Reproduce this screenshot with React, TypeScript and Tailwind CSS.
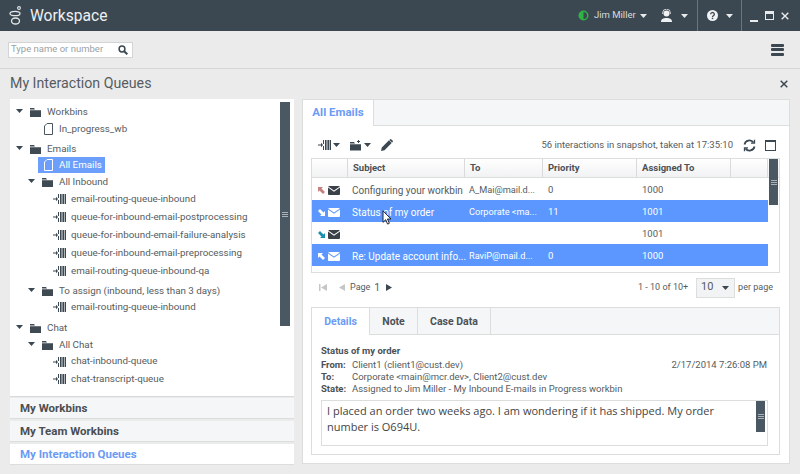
import type { ReactNode } from "react";

function Caret({ className = "text-[#3b4851]" }: { className?: string }) {
  return (
    <svg width="7" height="4" viewBox="0 0 7 4" className={`shrink-0 ${className}`}>
      <path d="M0 0h7L3.5 4z" fill="currentColor" />
    </svg>
  );
}

function FolderIcon() {
  return (
    <svg width="11" height="10" viewBox="0 0 11 10" className="shrink-0 text-[#3f4a52]">
      <path d="M0 2.500V1h4l1 1.500zM0 3.200h11V10H0z" fill="currentColor" />
    </svg>
  );
}

function DocIcon({ className = "text-[#4a555d]" }: { className?: string }) {
  return (
    <svg width="9" height="12" viewBox="0 0 9 12" className={`shrink-0 ${className}`}>
      <path d="M3 .5h5.500v11H.5V3z" fill="none" stroke="currentColor" />
    </svg>
  );
}

function QueueIcon({ className = "text-[#3b4851]" }: { className?: string }) {
  return (
    <svg width="13" height="10" viewBox="0 0 13 10" className={`shrink-0 ${className}`}>
      <path d="M0 4.500h3V2.800L5 5 3 7.200V5.500H0z" fill="currentColor" />
      <path d="M5 0h1v4H5zM5 6h1v4H5z" fill="currentColor" />
      <path d="M7 0h1.600v10H7zM9.400 0H11v10H9.400zM11.600 0H13v10h-1.400z" fill="currentColor" />
    </svg>
  );
}

function Envelope({ className }: { className: string }) {
  return (
    <svg width="12" height="9" viewBox="0 0 12 9" className={`shrink-0 ${className}`}>
      <path d="M1 0h10a1 1 0 0 1 .8.5L6 4.600.2.500A1 1 0 0 1 1 0zM0 1.600l6 4.200 6-4.200V8a1 1 0 0 1-1 1H1a1 1 0 0 1-1-1z" fill="currentColor" />
    </svg>
  );
}

function ArrowIn({ className, flip }: { className: string; flip?: boolean }) {
  return (
    <svg width="7" height="7" viewBox="0 0 7 7" className={`shrink-0 ${flip ? "rotate-180" : ""} ${className}`}>
      <path d="M0 0h5L3.500 1.500 7 5 5 7 1.500 3.500 0 5z" fill="currentColor" />
    </svg>
  );
}

function GripBar({ className }: { className: string }) {
  return (
    <div className={`flex shrink-0 flex-col items-center justify-center gap-[1px] bg-[#4a5863] ${className}`}>
      <div className="h-px w-[6px] bg-[#aab2b8]" />
      <div className="h-px w-[6px] bg-[#aab2b8]" />
      <div className="h-px w-[6px] bg-[#aab2b8]" />
    </div>
  );
}

function TreeRow({
  indent,
  className,
  children,
}: {
  indent: string;
  className: string;
  children: ReactNode;
}) {
  return <div className={`flex items-center whitespace-nowrap ${indent} ${className}`}>{children}</div>;
}

function Folder({ label, level, className }: { label: string; level: 0 | 1; className: string }) {
  return (
    <TreeRow indent={level === 0 ? "pl-[2px]" : "pl-[14px]"} className={className}>
      <Caret className="mb-[3px] mr-[7px] text-[#3b4851]" />
      <FolderIcon />
      <span className="ml-[6px]">{label}</span>
    </TreeRow>
  );
}

function Queue({ label, className }: { label: string; className: string }) {
  return (
    <TreeRow indent="pl-[39px]" className={className}>
      <QueueIcon />
      <span className="ml-[5px]">{label}</span>
    </TreeRow>
  );
}

function Accordion({ label, active }: { label: string; active?: boolean }) {
  return (
    <div
      className={`flex h-[21px] items-center border-b border-[#dcdddd] pl-[10px] pt-[1px] text-[11.5px] font-bold ${
        active ? "bg-white text-[#6b9bf5]" : "bg-[#f5f6f8] text-[#4a4f53]"
      }`}
    >
      {label}
    </div>
  );
}

const rows = [
  { dir: "red", subject: "Configuring your workbin", to: "A_Mai@mail.d...", priority: "0", assigned: "1000" },
  { dir: "in", subject: "Status of my order", to: "Corporate <ma...", priority: "11", assigned: "1001", selected: true },
  { dir: "teal", subject: "", to: "", priority: "", assigned: "1001" },
  { dir: "out", subject: "Re: Update account info...", to: "RaviP@mail.d...", priority: "0", assigned: "1000", selected: true },
];

function MailRow({ row }: { row: (typeof rows)[number] }) {
  const sel = row.selected;
  return (
    <div className={`flex h-[22px] items-center pt-[2px] ${sel ? "bg-[#5c97ff] text-white" : "text-[#555c61]"}`}>
      <div className="flex w-[36px] items-center pl-[6px]">
        {row.dir === "red" && <ArrowIn className="mr-[3px] text-[#c98080]" />}
        {row.dir === "in" && <ArrowIn flip className="mr-[3px] text-white" />}
        {row.dir === "teal" && <ArrowIn flip className="mr-[3px] text-[#1b8fb0]" />}
        {row.dir === "out" && <ArrowIn className="mr-[3px] text-white" />}
        <Envelope className={sel ? "text-white" : "text-[#3b4149]"} />
      </div>
      <div className="w-[117px] whitespace-nowrap pl-[4px] text-[10px]">{row.subject}</div>
      <div className="w-[78px] whitespace-nowrap pl-[4px] text-[9.2px]">{row.to}</div>
      <div className="w-[94px] pl-[5px]">{row.priority}</div>
      <div className="pl-[5px]">{row.assigned}</div>
    </div>
  );
}

function HeaderCell({ label, className }: { label?: string; className: string }) {
  return (
    <div className={`flex h-full items-center border-r border-[#d8dadb] pl-[5px] font-bold text-[#4c5156] ${className}`}>
      {label}
    </div>
  );
}

export default function App() {
  return (
    <div className="flex h-[474px] w-[800px] flex-col overflow-hidden bg-[#ebebeb] font-['Roboto',sans-serif] text-[9.5px] text-[#555c61]">
      <header className="flex h-[31px] shrink-0 items-center bg-[#3b4851] text-white">
        <svg width="14" height="20" viewBox="0 0 14 20" className="ml-[9px] mt-[1px] text-[#e4e7e8]">
          <circle cx="10" cy="2" r="1.400" fill="none" stroke="currentColor" strokeWidth="1.100" />
          <ellipse cx="6" cy="7.500" rx="5" ry="2.200" fill="none" stroke="currentColor" strokeWidth="1.300" />
          <ellipse cx="6.500" cy="15" rx="4" ry="3" fill="none" stroke="currentColor" strokeWidth="1.300" />
        </svg>
        <span className="ml-[7px] mt-[2px] text-[15.6px] text-[#eef0f1]">Workspace</span>
        <div className="ml-auto flex h-full items-center">
          <svg width="11" height="11" viewBox="0 0 11 11" className="mr-[5px]">
            <circle cx="5.500" cy="5.500" r="5" fill="#2fb344" />
            <path d="M5.500 2a3.500 3.500 0 0 1 0 7z" fill="#3b4851" />
          </svg>
          <span className="w-[42px] whitespace-nowrap text-[9.5px] text-[#d8dcde]">Jim Miller</span>
          <Caret className="ml-[4px] mr-[13px] text-[#e8eaeb]" />
          <svg width="13" height="13" viewBox="0 0 13 13" className="text-[#eef0f1]">
            <circle cx="6.500" cy="4.500" r="3" fill="currentColor" />
            <path d="M2.600 5V4a3.900 3.900 0 0 1 7.800 0v1" fill="none" stroke="currentColor" strokeWidth="0.800" />
            <path d="M1 13c0-3 2-4 5.500-4s5.500 1 5.500 4z" fill="currentColor" />
          </svg>
          <Caret className="ml-[8px] mr-[9px] text-[#e8eaeb]" />
          <div className="h-full w-px bg-[#6a757c]" />
          <svg width="11" height="11" viewBox="0 0 11 11" className="ml-[9px]">
            <circle cx="5.500" cy="5.500" r="5.500" fill="#f0f2f3" />
            <path d="M3.700 4.200a1.800 1.700 0 1 1 2.700 1.500c-.6.400-.9.600-.9 1.200" fill="none" stroke="#3b4851" strokeWidth="1.300" />
            <rect x="4.800" y="7.700" width="1.400" height="1.400" fill="#3b4851" />
          </svg>
          <Caret className="ml-[8px] mr-[8px] text-[#e8eaeb]" />
          <div className="h-full w-px bg-[#6a757c]" />
          <div className="ml-[8px] mt-[10px] h-[2px] w-[8px] self-center bg-[#e8eaeb]" />
          <div className="ml-[7px] h-[9px] w-[9px] border-[1.5px] border-t-[3px] border-[#e8eaeb]" />
          <svg width="8" height="8" viewBox="0 0 8 8" className="ml-[7px] mr-[11px] text-[#e8eaeb]">
            <path d="M.7.7l6.600 6.600M7.300.7L.7 7.300" stroke="currentColor" strokeWidth="1.400" />
          </svg>
        </div>
      </header>

      <div className="flex h-[38px] shrink-0 items-center justify-between border-b border-[#d5d6d7] pl-[8px] pr-[16px]">
        <div className="flex h-[16px] w-[125px] items-center justify-between border border-[#d3d4d5] bg-white pl-[2px] pr-[4px]">
          <span className="text-[9.5px] text-[#9a9fa3]">Type name or number</span>
          <svg width="10" height="10" viewBox="0 0 10 10" className="text-[#3b4851]">
            <circle cx="4" cy="4" r="2.900" fill="none" stroke="currentColor" strokeWidth="1.500" />
            <path d="M6.200 6.200L9.300 9.300" stroke="currentColor" strokeWidth="2" />
          </svg>
        </div>
        <div className="flex w-[13px] flex-col gap-[1.500px]">
          <div className="h-[3px] rounded-[1px] bg-[#3b4851]" />
          <div className="h-[3px] rounded-[1px] bg-[#3b4851]" />
          <div className="h-[3px] rounded-[1px] bg-[#3b4851]" />
        </div>
      </div>

      <div className="flex h-[30px] shrink-0 items-center justify-between pl-[10px] pr-[12px]">
        <span className="text-[14.2px] text-[#555c61]">My Interaction Queues</span>
        <svg width="8" height="8" viewBox="0 0 8 8" className="text-[#3b4851]">
          <path d="M.7.7l6.600 6.600M7.300.7L.7 7.300" stroke="currentColor" strokeWidth="1.500" />
        </svg>
      </div>

      <div className="flex items-start pl-[10px]">
        <aside className="flex w-[284px] shrink-0 flex-col gap-[2px]">
          <div className="flex h-[297px] bg-white pl-[4px] pr-[4px] pt-[3px] text-[9.8px] text-[#555c61] shadow-[0_1px_0_#d8d9da]">
            <div className="flex-1 pt-[2px]">
              <Folder label="Workbins" level={0} className="h-[16px]" />
              <TreeRow indent="pl-[30px]" className="h-[18px]">
                <DocIcon />
                <span className="ml-[6px]">In_progress_wb</span>
              </TreeRow>
              <Folder label="Emails" level={0} className="mt-[3px] h-[16px]" />
              <div className="ml-[24px] flex h-[16px] w-[67px] items-center whitespace-nowrap bg-[#6b9ffb] pl-[6px] text-white">
                <DocIcon className="text-white" />
                <span className="ml-[6px]">All Emails</span>
              </div>
              <Folder label="All Inbound" level={1} className="mt-[1px] h-[16px]" />
              <Queue label="email-routing-queue-inbound" className="h-[18px]" />
              <Queue label="queue-for-inbound-email-postprocessing" className="h-[18px]" />
              <Queue label="queue-for-inbound-email-failure-analysis" className="h-[18px]" />
              <Queue label="queue-for-inbound-email-preprocessing" className="h-[18px]" />
              <Queue label="email-routing-queue-inbound-qa" className="h-[18px]" />
              <Folder label="To assign (inbound, less than 3 days)" level={1} className="mt-[3px] h-[16px]" />
              <Queue label="email-routing-queue-inbound" className="h-[16px]" />
              <Folder label="Chat" level={0} className="mt-[5px] h-[16px]" />
              <Folder label="All Chat" level={1} className="mt-[1px] h-[16px]" />
              <Queue label="chat-inbound-queue" className="h-[17px]" />
              <Queue label="chat-transcript-queue" className="h-[18px]" />
            </div>
            <GripBar className="h-[224px] w-[10px]" />
          </div>
          <Accordion label="My Workbins" />
          <Accordion label="My Team Workbins" />
          <Accordion label="My Interaction Queues" active />
        </aside>

        <main className="ml-[8px] flex h-[365px] w-[488px] flex-col border border-[#dcdddd] bg-white">
          <div className="flex h-[26px] shrink-0 border-b border-[#dcdddd] bg-[#f5f6f8]">
            <div className="-mb-px flex w-[71px] items-center justify-center border-r border-[#dcdddd] bg-white text-[11.5px] font-bold text-[#6b9bf5]">
              All Emails
            </div>
          </div>

          <div className="flex h-[32px] shrink-0 items-center pl-[15px] pr-[13px] pt-[6px] text-[#3b4851]">
            <QueueIcon />
            <Caret className="ml-[2px]" />
            <svg width="12" height="11" viewBox="0 0 12 11" className="ml-[10px] text-[#3b4851]">
              <path d="M0 3.500V2h4l1 1.500zM0 4.200h11V10.500H0zM8 0h1v1h1v1H9v1H8V2H7V1h1z" fill="currentColor" />
            </svg>
            <Caret className="ml-[2px]" />
            <svg width="12" height="12" viewBox="0 0 12 12" className="ml-[10px]">
              <path d="M0 12l.8-3.500L8 1.300 10.700 4 3.500 11.200zM9 .4a1 1 0 0 1 1.400 0l1.200 1.200a1 1 0 0 1 0 1.400l-.5.500L8.400 .9z" fill="currentColor" />
            </svg>
            <span className="ml-auto text-[#555c61]">56 interactions in snapshot, taken at 17:35:10</span>
            <svg width="13" height="13" viewBox="0 0 13 13" className="ml-[10px]" fill="none" stroke="currentColor" strokeWidth="1.800">
              <path d="M1.500 5.500A5 5 0 0 1 10.500 3.500M11.500 7.500A5 5 0 0 1 2.500 9.500" />
              <path d="M11.500.8v3.400H8M1.500 12.200V8.800H5" strokeWidth="1.300" />
            </svg>
            <div className="ml-[9px] h-[11px] w-[11px] border border-t-[2px] border-[#3b4851]" />
          </div>

          <div className="relative ml-[8px] mr-[9px] h-[115px] shrink-0 border border-[#dcdddd]">
            <div className="flex h-[19px] border-b border-[#dcdddd] bg-gradient-to-b from-white to-[#f1f2f3]">
              <HeaderCell className="w-[36px]" />
              <HeaderCell label="Subject" className="w-[117px]" />
              <HeaderCell label="To" className="w-[78px]" />
              <HeaderCell label="Priority" className="w-[94px]" />
              <HeaderCell label="Assigned To" className="w-[94px]" />
              <HeaderCell className="w-[37px]" />
            </div>
            <div className="w-[456px]">
              {rows.map((row) => (
                <MailRow key={row.subject + row.assigned} row={row} />
              ))}
            </div>
            <GripBar className="absolute right-[1px] top-0 h-[46px] w-[9px]" />
            <svg width="10" height="15" viewBox="0 0 11 17" className="absolute left-[70px] top-[51px]">
              <path d="M1 1v13l3-3 2.200 5 2-1-2.200-4.800H10z" fill="#fff" stroke="#111" strokeWidth="1" />
            </svg>
          </div>

          <div className="flex h-[34px] shrink-0 items-center pb-[5px] pl-[16px] pr-[16px] text-[9px]">
            <svg width="8" height="7" viewBox="0 0 8 7" className="text-[#c4c6c8]">
              <path d="M0 0h1.500v7H0zM8 0v7L2 3.500z" fill="currentColor" />
            </svg>
            <svg width="6" height="7" viewBox="0 0 6 7" className="ml-[12px] text-[#c4c6c8]">
              <path d="M6 0v7L0 3.500z" fill="currentColor" />
            </svg>
            <span className="ml-[5px]">Page</span>
            <span className="ml-[4px] text-[10.5px]">1</span>
            <svg width="6" height="7" viewBox="0 0 6 7" className="ml-[6px] text-[#3b4851]">
              <path d="M0 0v7l6-3.500z" fill="currentColor" />
            </svg>
            <span className="ml-auto">1 - 10 of 10+</span>
            <div className="ml-[8px] flex h-[20px] w-[39px] items-center justify-between border border-[#dcdddd] bg-[#f2f3f4] pl-[4px] pr-[5px] text-[11px]">
              10
              <Caret />
            </div>
            <span className="ml-[3px]">per page</span>
          </div>

          <div className="ml-[8px] mr-[9px] flex h-[148px] shrink-0 flex-col border border-[#dcdddd]">
            <div className="flex h-[27px] shrink-0 border-b border-[#dcdddd] bg-[#f5f6f8] text-[10.5px] font-bold text-[#4c5156]">
              <div className="-mb-px flex w-[58px] items-center justify-center border-r border-[#dcdddd] bg-white text-[#6b9bf5]">Details</div>
              <div className="-mb-px flex w-[48px] items-center justify-center border-r border-[#dcdddd]">Note</div>
              <div className="-mb-px flex w-[73px] items-center justify-center border-r border-[#dcdddd]">Case Data</div>
            </div>
            <div className="pl-[9px] pr-[11px] pt-[10px] leading-[12px]">
              <div className="font-bold text-[#4c5156]">Status of my order</div>
              <div className="mt-[1px] flex h-[13px] items-center">
                <b className="w-[31px] text-[#4c5156]">From:</b>
                Client1 (client1@cust.dev)
                <span className="ml-auto mr-[1px]">2/17/2014 7:26:08 PM</span>
              </div>
              <div className="flex h-[12px] items-center">
                <b className="w-[31px] text-[#4c5156]">To:</b>
                {"Corporate <main@mcr.dev>, Client2@cust.dev"}
              </div>
              <div className="flex h-[11px] items-center">
                <b className="w-[31px] text-[#4c5156]">State:</b>
                Assigned to Jim Miller - My Inbound E-mails in Progress workbin
              </div>
              <div className="mt-[6px] flex h-[46px] border border-[#dcdddd] pl-[5px] font-['Open_Sans',sans-serif] text-[11px] leading-[16px] text-[#444]">
                <p className="mt-[2px] w-[400px]">
                  I placed an order two weeks ago. I am wondering if it has shipped. My order number is O694U.
                </p>
                <GripBar className="ml-auto mr-[2px] h-[31px] w-[9px]" />
              </div>
            </div>
          </div>
        </main>
      </div>
    </div>
  );
}
